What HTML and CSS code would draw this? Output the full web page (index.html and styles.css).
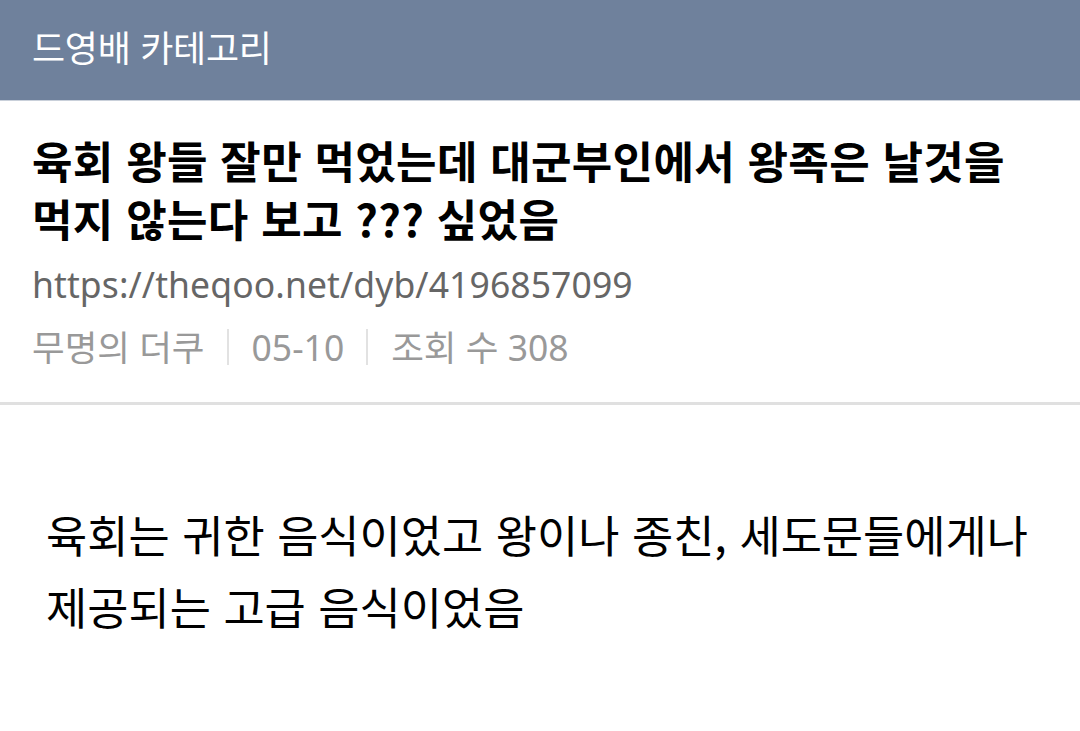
FILE: index.html
```html
<!DOCTYPE html>
<html lang="ko">
<head>
<meta charset="utf-8">
<link rel="stylesheet" href="styles.css">
</head>
<body>
<header class="topbar">드영배 카테고리</header>
<section class="post-head">
  <h1 class="title">육회 왕들 잘만 먹었는데 대군부인에서 왕족은 날것을 먹지 않는다 보고 ??? 싶었음</h1>
  <div class="url">https://theqoo.net/dyb/4196857099</div>
  <div class="meta">
    <span>무명의 더쿠</span>
    <span class="sep"></span>
    <span>05-10</span>
    <span class="sep"></span>
    <span>조회 수 308</span>
  </div>
</section>
<article class="body">
  <p>육회는 귀한 음식이었고 왕이나 종친, 세도문들에게나 제공되는 고급 음식이었음</p>
</article>
</body>
</html>
```
FILE: styles.css
```css
* { box-sizing: border-box; }
html, body { margin: 0; padding: 0; background: #fff; }
body {
  width: 1080px;
  font-family: "Noto Sans CJK KR", "Noto Sans", sans-serif;
  color: #000;
}
.topbar {
  height: 101px;
  background: #6f819c;
  color: #fff;
  font-size: 36px;
  letter-spacing: -0.3px;
  display: flex;
  align-items: center;
  padding-left: 32px;
  padding-bottom: 8px;
  border-bottom: 1px solid #c9d0da;
}
.post-head {
  padding: 30px 32px 33px;
  border-bottom: 3px solid #e0e0e0;
}
.title {
  margin: 0;
  font-size: 44px;
  font-weight: 700;
  line-height: 58px;
  letter-spacing: 0.3px;
}
.url {
  margin-top: 15px;
  font-family: "Noto Sans", "Noto Sans CJK KR", sans-serif;
  font-size: 35.5px;
  color: #666;
  line-height: 44px;
  letter-spacing: 0.1px;
}
.meta {
  margin-top: 19px;
  display: flex;
  align-items: center;
  font-family: "Noto Sans", "Noto Sans CJK KR", sans-serif;
  font-size: 35.5px;
  color: #999;
  line-height: 44px;
}
.sep {
  width: 2px;
  height: 36px;
  background: #e2e2e2;
  margin: 0 23px 0 22px;
}
.body {
  padding: 93px 46px 0;
}
.body p {
  margin: 0;
  font-size: 44.8px;
  line-height: 72px;
}
```
